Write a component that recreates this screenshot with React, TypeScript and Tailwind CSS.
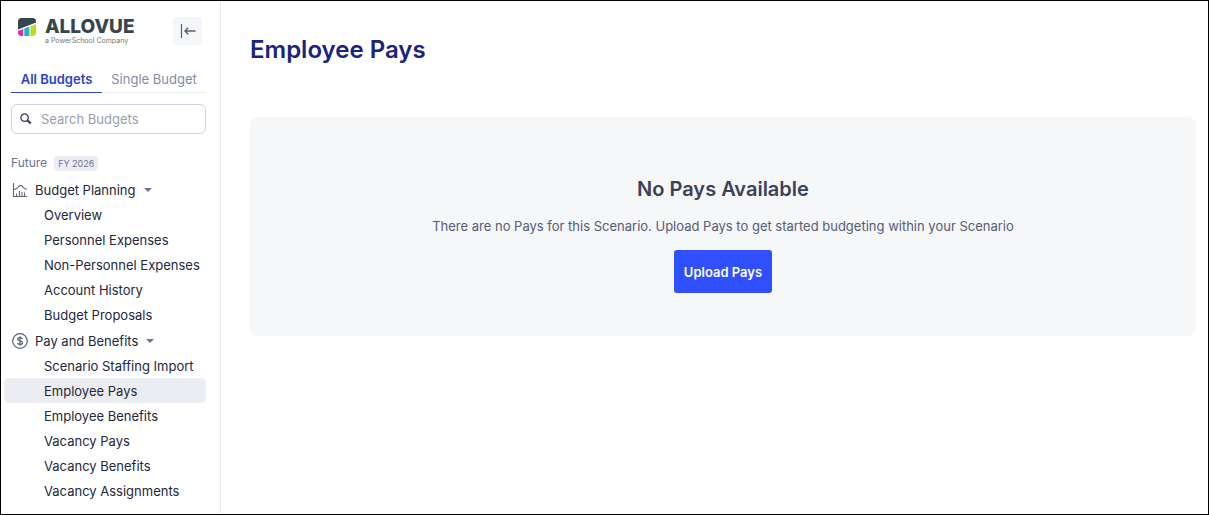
import { useState } from "react";

const planning = [
  "Overview",
  "Personnel Expenses",
  "Non-Personnel Expenses",
  "Account History",
  "Budget Proposals",
];

const pay = [
  "Scenario Staffing Import",
  "Employee Pays",
  "Employee Benefits",
  "Vacancy Pays",
  "Vacancy Benefits",
  "Vacancy Assignments",
];

function LogoMark() {
  return (
    <svg className="h-[18px] w-[18px] shrink-0" viewBox="0 0 18 18" aria-hidden="true">
      <path d="M3.5 0H14.5Q18 0 18 3.5V4.6L0 11.6V3.5Q0 0 3.5 0Z" fill="#34464f" />
      <path d="M0 13.1L5.3 11V18H3.5Q0 18 0 14.5Z" fill="#dd2fa0" />
      <path d="M6.3 10.6L11.4 8.6V18H6.3Z" fill="#25b0d2" />
      <path d="M12.4 8.2L18 6V14.5Q18 18 14.5 18H12.4Z" fill="#b9df1f" />
    </svg>
  );
}

function CollapseIcon() {
  return (
    <svg className="h-4 w-4" viewBox="0 0 16 16" fill="none" stroke="#585d7d" aria-hidden="true">
      <path d="M1.5 1V15" strokeWidth="1.2" />
      <path d="M5 8H15.5M8.2 4.8L5 8L8.2 11.2" strokeWidth="1.4" />
    </svg>
  );
}

function SearchIcon() {
  return (
    <svg className="h-3 w-3 shrink-0" viewBox="0 0 12 12" fill="none" stroke="#3d4263" aria-hidden="true">
      <circle cx="4.6" cy="4.6" r="3.7" strokeWidth="1.3" />
      <path d="M7.4 7.4L10.8 10.4" strokeWidth="2.2" />
    </svg>
  );
}

function ChartIcon() {
  return (
    <svg className="h-4 w-4 shrink-0" viewBox="0 0 16 16" fill="none" stroke="#62677f" aria-hidden="true">
      <path d="M1.5 1V14.5H15" strokeWidth="1.1" />
      <path d="M4.5 14V11.5M7.5 14V9M10 14V10M12.5 14V10.5" strokeWidth="1.1" />
      <path d="M2 7.4L4.5 6.8L7.5 3.6H9.5L12.5 6.6L15 7.2" strokeWidth="1.1" />
    </svg>
  );
}

function DollarIcon() {
  return (
    <svg className="h-4 w-4 shrink-0" viewBox="0 0 16 16" fill="none" stroke="#585d7d" aria-hidden="true">
      <circle cx="8" cy="8" r="7.3" strokeWidth="1.2" />
      <path
        d="M10.4 6.1C10.2 5.1 9.3 4.6 8 4.6C6.6 4.6 5.7 5.2 5.7 6.2C5.7 8.4 10.5 7.3 10.5 9.7C10.5 10.8 9.5 11.4 8 11.4C6.6 11.4 5.6 10.8 5.4 9.8M8 3.2V12.8"
        strokeWidth="1.2"
      />
    </svg>
  );
}

function Caret() {
  return (
    <svg className="h-1 w-2" viewBox="0 0 8 4" fill="#6d7396" aria-hidden="true">
      <path d="M0 0H8L4 4Z" />
    </svg>
  );
}

type GroupProps = { icon: React.ReactNode; title: string; items: string[]; current?: string };

function NavGroup({ icon, title, items, current }: GroupProps) {
  const [open, setOpen] = useState(true);
  return (
    <section>
      <button
        type="button"
        aria-expanded={open}
        onClick={() => setOpen(!open)}
        className="flex h-[25px] items-center pl-2 text-[#23283c]"
      >
        {icon}
        <span className="ml-[7px] mr-2">{title}</span>
        <Caret />
      </button>
      {open && (
        <ul>
          {items.map((item) => (
            <li key={item}>
              <a
                href="#"
                aria-current={item === current ? "page" : undefined}
                className="flex h-[25px] items-center rounded-[5px] pl-10 text-[#23283c] aria-[current=page]:bg-[#ecedf2]"
              >
                {item}
              </a>
            </li>
          ))}
        </ul>
      )}
    </section>
  );
}

export default function App() {
  return (
    <div className="flex min-h-screen border border-black bg-white font-['Inter',sans-serif] text-[13px] leading-5">
      <aside className="w-[220px] shrink-0 border-r border-[#e9eaef] pl-[3px] pr-[14px]">
        <header className="flex items-start justify-between pl-[14px] pr-[4px] pt-4">
          <a href="#" className="flex gap-[9px] pt-px">
            <LogoMark />
            <span className="flex flex-col">
              <span className="text-[19px] font-extrabold leading-[18px] text-[#34464f]">ALLOVUE</span>
              <span className="text-[7px] leading-[9px] text-[#6f7a80]">a PowerSchool Company</span>
            </span>
          </a>
          <button
            type="button"
            aria-label="Collapse sidebar"
            className="flex h-7 w-[29px] items-center justify-center rounded-[3px] bg-[#f5f6f8]"
          >
            <CollapseIcon />
          </button>
        </header>

        <div role="tablist" className="ml-[7px] mt-[21px] flex">
          <button
            type="button"
            role="tab"
            aria-selected="true"
            className="h-[27px] w-[91px] border-b border-[#2d45c8] font-semibold text-[#2d45c8]"
          >
            All Budgets
          </button>
          <button
            type="button"
            role="tab"
            aria-selected="false"
            className="h-[27px] flex-1 border-b border-[#e9eaef] text-[#858aa6]"
          >
            Single Budget
          </button>
        </div>

        <div className="ml-[7px] mt-[11px] flex h-[30px] items-center gap-[9px] rounded-md border border-[#cfcfdf] px-2">
          <SearchIcon />
          <input
            type="text"
            aria-label="Search Budgets"
            placeholder="Search Budgets"
            className="h-7 min-w-0 flex-1 bg-transparent outline-none placeholder:text-[#9a9eb0]"
          />
        </div>

        <div className="mb-1 ml-[7px] mt-[19px] flex items-center gap-[7px]">
          <span className="text-xs leading-5 text-[#6d7396]">Future</span>
          <span className="rounded-sm bg-[#ecedf2] px-1 text-[9px] leading-[15px] text-[#6d7396]">FY 2026</span>
        </div>

        <nav aria-label="Budgets" className="flex flex-col gap-px">
          <NavGroup icon={<ChartIcon />} title="Budget Planning" items={planning} />
          <NavGroup icon={<DollarIcon />} title="Pay and Benefits" items={pay} current="Employee Pays" />
        </nav>
      </aside>

      <main className="min-w-0 flex-1 pl-[29px] pr-3 pt-[33px]">
        <h1 className="text-2xl font-semibold leading-8 text-[#1a237e]">Employee Pays</h1>
        <section className="mt-[51px] flex flex-col items-center rounded-lg bg-[#f5f7f9] pb-[43px] pt-[58px]">
          <h2 className="text-xl font-semibold leading-7 text-[#3c4158]">No Pays Available</h2>
          <p className="mt-[13px] text-[#555b78]">
            There are no Pays for this Scenario. Upload Pays to get started budgeting within your Scenario
          </p>
          <button
            type="button"
            className="mt-[14px] h-[43px] rounded-[3px] bg-[#304ffe] px-[10px] font-semibold text-white"
          >
            Upload Pays
          </button>
        </section>
      </main>
    </div>
  );
}
